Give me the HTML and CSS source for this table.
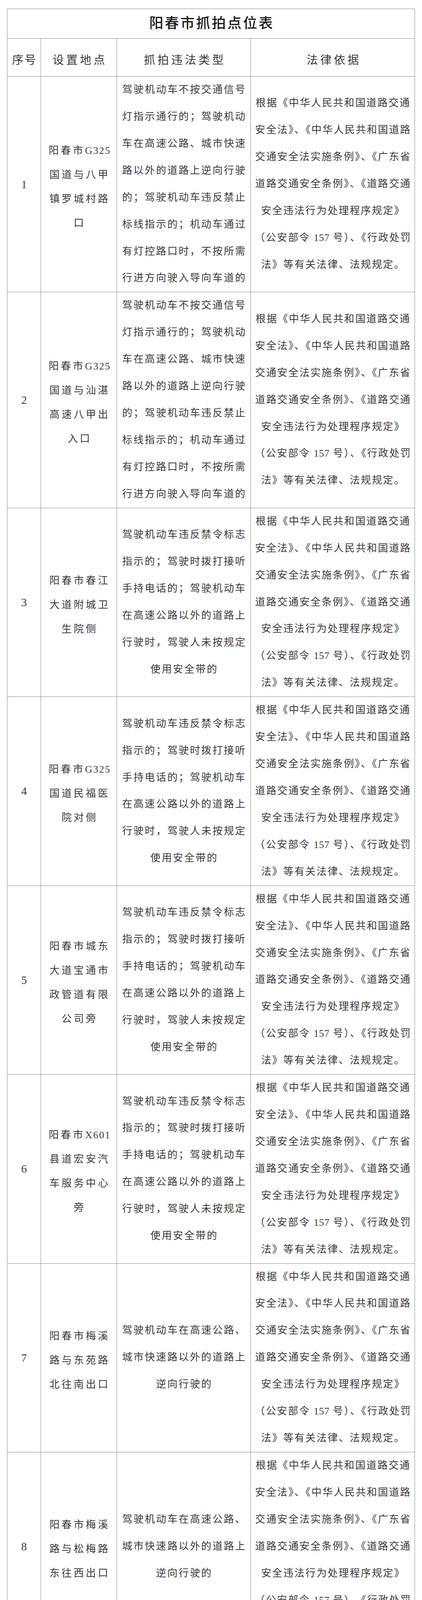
FILE: index.html
```html
<!DOCTYPE html>
<html lang="zh-CN">
<head>
<meta charset="utf-8">
<title>阳春市抓拍点位表</title>
<link rel="stylesheet" href="styles.css">
</head>
<body>
<div class="sheet">
<table class="list">
<colgroup><col class="c1"><col class="c2"><col class="c3"><col class="c4"></colgroup>
<thead>
<tr><th class="title" colspan="4">阳春市抓拍点位表</th></tr>
<tr class="head"><th class="hseq">序号</th><th>设置地点</th><th>抓拍违法类型</th><th>法律依据</th></tr>
</thead>
<tbody>
<tr>
<td class="seq">1</td>
<td class="loc">阳春市<span class="lat">G325</span><br>国道与八甲<br>镇罗城村路<br>口</td>
<td class="type">驾驶机动车不按交通信号<br>灯指示通行的；驾驶机动<br>车在高速公路、城市快速<br>路以外的道路上逆向行驶<br>的；驾驶机动车违反禁止<br>标线指示的；机动车通过<br>有灯控路口时，不按所需<br>行进方向驶入导向车道的</td>
<td class="law">根据《中华人民共和国道路交通<br>安全法<span class="h">》</span>、<span class="h">《</span>中华人民共和国道路<br>交通安全法实施条例<span class="h">》</span>、<span class="h">《</span>广东省<br>道路交通安全条例<span class="h">》</span>、<span class="h">《</span>道路交通<br>安全违法行为处理程序规定》<br>（公安部令 <span class="num">157</span> 号<span class="h">）</span>、<span class="h">《</span>行政处罚<br>法》等有关法律、法规规定。</td>
</tr>
<tr>
<td class="seq">2</td>
<td class="loc">阳春市<span class="lat">G325</span><br>国道与汕湛<br>高速八甲出<br>入口</td>
<td class="type">驾驶机动车不按交通信号<br>灯指示通行的；驾驶机动<br>车在高速公路、城市快速<br>路以外的道路上逆向行驶<br>的；驾驶机动车违反禁止<br>标线指示的；机动车通过<br>有灯控路口时，不按所需<br>行进方向驶入导向车道的</td>
<td class="law">根据《中华人民共和国道路交通<br>安全法<span class="h">》</span>、<span class="h">《</span>中华人民共和国道路<br>交通安全法实施条例<span class="h">》</span>、<span class="h">《</span>广东省<br>道路交通安全条例<span class="h">》</span>、<span class="h">《</span>道路交通<br>安全违法行为处理程序规定》<br>（公安部令 <span class="num">157</span> 号<span class="h">）</span>、<span class="h">《</span>行政处罚<br>法》等有关法律、法规规定。</td>
</tr>
<tr>
<td class="seq">3</td>
<td class="loc">阳春市春江<br>大道附城卫<br>生院侧</td>
<td class="type">驾驶机动车违反禁令标志<br>指示的；驾驶时拨打接听<br>手持电话的；驾驶机动车<br>在高速公路以外的道路上<br>行驶时，驾驶人未按规定<br>使用安全带的</td>
<td class="law">根据《中华人民共和国道路交通<br>安全法<span class="h">》</span>、<span class="h">《</span>中华人民共和国道路<br>交通安全法实施条例<span class="h">》</span>、<span class="h">《</span>广东省<br>道路交通安全条例<span class="h">》</span>、<span class="h">《</span>道路交通<br>安全违法行为处理程序规定》<br>（公安部令 <span class="num">157</span> 号<span class="h">）</span>、<span class="h">《</span>行政处罚<br>法》等有关法律、法规规定。</td>
</tr>
<tr>
<td class="seq">4</td>
<td class="loc">阳春市<span class="lat">G325</span><br>国道民福医<br>院对侧</td>
<td class="type">驾驶机动车违反禁令标志<br>指示的；驾驶时拨打接听<br>手持电话的；驾驶机动车<br>在高速公路以外的道路上<br>行驶时，驾驶人未按规定<br>使用安全带的</td>
<td class="law">根据《中华人民共和国道路交通<br>安全法<span class="h">》</span>、<span class="h">《</span>中华人民共和国道路<br>交通安全法实施条例<span class="h">》</span>、<span class="h">《</span>广东省<br>道路交通安全条例<span class="h">》</span>、<span class="h">《</span>道路交通<br>安全违法行为处理程序规定》<br>（公安部令 <span class="num">157</span> 号<span class="h">）</span>、<span class="h">《</span>行政处罚<br>法》等有关法律、法规规定。</td>
</tr>
<tr>
<td class="seq">5</td>
<td class="loc">阳春市城东<br>大道宝通市<br>政管道有限<br>公司旁</td>
<td class="type">驾驶机动车违反禁令标志<br>指示的；驾驶时拨打接听<br>手持电话的；驾驶机动车<br>在高速公路以外的道路上<br>行驶时，驾驶人未按规定<br>使用安全带的</td>
<td class="law">根据《中华人民共和国道路交通<br>安全法<span class="h">》</span>、<span class="h">《</span>中华人民共和国道路<br>交通安全法实施条例<span class="h">》</span>、<span class="h">《</span>广东省<br>道路交通安全条例<span class="h">》</span>、<span class="h">《</span>道路交通<br>安全违法行为处理程序规定》<br>（公安部令 <span class="num">157</span> 号<span class="h">）</span>、<span class="h">《</span>行政处罚<br>法》等有关法律、法规规定。</td>
</tr>
<tr>
<td class="seq">6</td>
<td class="loc">阳春市<span class="lat">X601</span><br>县道宏安汽<br>车服务中心<br>旁</td>
<td class="type">驾驶机动车违反禁令标志<br>指示的；驾驶时拨打接听<br>手持电话的；驾驶机动车<br>在高速公路以外的道路上<br>行驶时，驾驶人未按规定<br>使用安全带的</td>
<td class="law">根据《中华人民共和国道路交通<br>安全法<span class="h">》</span>、<span class="h">《</span>中华人民共和国道路<br>交通安全法实施条例<span class="h">》</span>、<span class="h">《</span>广东省<br>道路交通安全条例<span class="h">》</span>、<span class="h">《</span>道路交通<br>安全违法行为处理程序规定》<br>（公安部令 <span class="num">157</span> 号<span class="h">）</span>、<span class="h">《</span>行政处罚<br>法》等有关法律、法规规定。</td>
</tr>
<tr>
<td class="seq">7</td>
<td class="loc">阳春市梅溪<br>路与东苑路<br>北往南出口</td>
<td class="type">驾驶机动车在高速公路、<br>城市快速路以外的道路上<br>逆向行驶的</td>
<td class="law">根据《中华人民共和国道路交通<br>安全法<span class="h">》</span>、<span class="h">《</span>中华人民共和国道路<br>交通安全法实施条例<span class="h">》</span>、<span class="h">《</span>广东省<br>道路交通安全条例<span class="h">》</span>、<span class="h">《</span>道路交通<br>安全违法行为处理程序规定》<br>（公安部令 <span class="num">157</span> 号<span class="h">）</span>、<span class="h">《</span>行政处罚<br>法》等有关法律、法规规定。</td>
</tr>
<tr>
<td class="seq">8</td>
<td class="loc">阳春市梅溪<br>路与松梅路<br>东往西出口</td>
<td class="type">驾驶机动车在高速公路、<br>城市快速路以外的道路上<br>逆向行驶的</td>
<td class="law">根据《中华人民共和国道路交通<br>安全法<span class="h">》</span>、<span class="h">《</span>中华人民共和国道路<br>交通安全法实施条例<span class="h">》</span>、<span class="h">《</span>广东省<br>道路交通安全条例<span class="h">》</span>、<span class="h">《</span>道路交通<br>安全违法行为处理程序规定》<br>（公安部令 <span class="num">157</span> 号<span class="h">）</span>、<span class="h">《</span>行政处罚<br>法》等有关法律、法规规定。</td>
</tr>
<tr>
<td class="seq">9</td>
<td class="loc">阳春市云河<br>路与兴华路<br>东往西出口<br>（锐意食庄<br>旁）</td>
<td class="type">驾驶机动车在高速公路、<br>城市快速路以外的道路上<br>逆向行驶的</td>
<td class="law">根据《中华人民共和国道路交通<br>安全法<span class="h">》</span>、<span class="h">《</span>中华人民共和国道路<br>交通安全法实施条例<span class="h">》</span>、<span class="h">《</span>广东省<br>道路交通安全条例<span class="h">》</span>、<span class="h">《</span>道路交通<br>安全违法行为处理程序规定》<br>（公安部令 <span class="num">157</span> 号<span class="h">）</span>、<span class="h">《</span>行政处罚<br>法》等有关法律、法规规定。</td>
</tr>
<tr>
<td class="seq">10</td>
<td class="loc">阳春市梅溪<br>路与松梅路<br>南往北出口</td>
<td class="type">驾驶机动车在高速公路、<br>城市快速路以外的道路上<br>逆向行驶的</td>
<td class="law">根据《中华人民共和国道路交通<br>安全法<span class="h">》</span>、<span class="h">《</span>中华人民共和国道路<br>交通安全法实施条例<span class="h">》</span>、<span class="h">《</span>广东省<br>道路交通安全条例<span class="h">》</span>、<span class="h">《</span>道路交通<br>安全违法行为处理程序规定》<br>（公安部令 <span class="num">157</span> 号<span class="h">）</span>、<span class="h">《</span>行政处罚<br>法》等有关法律、法规规定。</td>
</tr>
<tr>
<td class="seq">11</td>
<td class="loc">阳春市梅溪<br>路与东苑路<br>南往北出口</td>
<td class="type">驾驶机动车在高速公路、<br>城市快速路以外的道路上<br>逆向行驶的</td>
<td class="law">根据《中华人民共和国道路交通<br>安全法<span class="h">》</span>、<span class="h">《</span>中华人民共和国道路<br>交通安全法实施条例<span class="h">》</span>、<span class="h">《</span>广东省<br>道路交通安全条例<span class="h">》</span>、<span class="h">《</span>道路交通<br>安全违法行为处理程序规定》<br>（公安部令 <span class="num">157</span> 号<span class="h">）</span>、<span class="h">《</span>行政处罚<br>法》等有关法律、法规规定。</td>
</tr>
<tr>
<td class="seq">12</td>
<td class="loc">阳春市松梅<br>路与金汇路<br>西往东入口</td>
<td class="type">驾驶机动车在高速公路、<br>城市快速路以外的道路上<br>逆向行驶的</td>
<td class="law">根据《中华人民共和国道路交通<br>安全法<span class="h">》</span>、<span class="h">《</span>中华人民共和国道路<br>交通安全法实施条例<span class="h">》</span>、<span class="h">《</span>广东省<br>道路交通安全条例<span class="h">》</span>、<span class="h">《</span>道路交通<br>安全违法行为处理程序规定》<br>（公安部令 <span class="num">157</span> 号<span class="h">）</span>、<span class="h">《</span>行政处罚<br>法》等有关法律、法规规定。</td>
</tr>
<tr>
<td class="seq">13</td>
<td class="loc">阳春市城云<br>路与云河路<br>西往东出口</td>
<td class="type">驾驶机动车在高速公路、<br>城市快速路以外的道路上<br>逆向行驶的</td>
<td class="law">根据《中华人民共和国道路交通<br>安全法<span class="h">》</span>、<span class="h">《</span>中华人民共和国道路<br>交通安全法实施条例<span class="h">》</span>、<span class="h">《</span>广东省<br>道路交通安全条例<span class="h">》</span>、<span class="h">《</span>道路交通<br>安全违法行为处理程序规定》<br>（公安部令 <span class="num">157</span> 号<span class="h">）</span>、<span class="h">《</span>行政处罚<br>法》等有关法律、法规规定。</td>
</tr>
<tr>
<td class="seq">14</td>
<td class="loc">阳春市阳春<br>大道与<span class="lat">Y151</span><br><span class="tight">乡道<span class="h">（</span>头堡路</span><br>口）</td>
<td class="type">驾驶摩托车，不戴安全头<br>盔的</td>
<td class="law">根据《中华人民共和国道路交通<br>安全法<span class="h">》</span>、<span class="h">《</span>中华人民共和国道路<br>交通安全法实施条例<span class="h">》</span>、<span class="h">《</span>广东省<br>道路交通安全条例<span class="h">》</span>、<span class="h">《</span>道路交通<br>安全违法行为处理程序规定》<br>（公安部令 <span class="num">157</span> 号<span class="h">）</span>、<span class="h">《</span>行政处罚<br>法》等有关法律、法规规定。</td>
</tr>
<tr>
<td class="seq">15</td>
<td class="loc">阳春市春江<br>大道与工业<br>大道交汇处</td>
<td class="type">驾驶摩托车，不戴安全头<br>盔的</td>
<td class="law">根据《中华人民共和国道路交通<br>安全法<span class="h">》</span>、<span class="h">《</span>中华人民共和国道路<br>交通安全法实施条例<span class="h">》</span>、<span class="h">《</span>广东省<br>道路交通安全条例<span class="h">》</span>、<span class="h">《</span>道路交通<br>安全违法行为处理程序规定》<br>（公安部令 <span class="num">157</span> 号<span class="h">）</span>、<span class="h">《</span>行政处罚<br>法》等有关法律、法规规定。</td>
</tr>
</tbody>
</table>
</div>
</body>
</html>
```

FILE: styles.css
```css
html, body {
  margin: 0;
  padding: 0;
  background: #ffffff;
}

body {
  width: 1080px;
}

.sheet {
  padding: 22px 0 0 18px;
}

.list {
  border-collapse: collapse;
  table-layout: fixed;
  width: 1043px;
  color: #3a3a3a;
  font-family: "Liberation Serif", "Noto Sans CJK SC", serif;
  font-size: 26px;
  font-weight: 400;
  text-spacing-trim: space-all;
}

.c1 { width: 86px; }
.c2 { width: 194px; }
.c3 { width: 343px; }
.c4 { width: 420px; }

.list th,
.list td {
  border: 1px solid #8a8a8a;
  padding: 0;
  text-align: center;
  vertical-align: middle;
  white-space: nowrap;
  font-weight: 400;
}

.list .title {
  font-size: 36px;
  letter-spacing: 4px;
  padding-left: 4px;
  line-height: 75px;
  color: #1a1a1a;
  font-weight: 500;
}

.head th {
  font-size: 29px;
  letter-spacing: 6px;
  padding: 14px 0 0 6px;
  line-height: 82px;
  color: #383838;
}

.head .hseq {
  letter-spacing: 3px;
  padding-left: 3px;
}

.seq {
  font-size: 29px;
  line-height: 40px;
  padding-top: 14px;
}

.list .loc {
  letter-spacing: 5px;
  padding: 14px 0 0 5px;
  line-height: 62px;
}

.lat {
  letter-spacing: 2px;
}

.list .type {
  letter-spacing: 2.9px;
  padding-left: 3px;
  line-height: 68.92px;
}

.list .law {
  letter-spacing: 2.35px;
  padding-left: 2px;
  line-height: 68.92px;
}

.num {
  letter-spacing: 0.5px;
}

.h {
  font-feature-settings: "halt" 1;
}

.tight {
  letter-spacing: 3px;
}
```
